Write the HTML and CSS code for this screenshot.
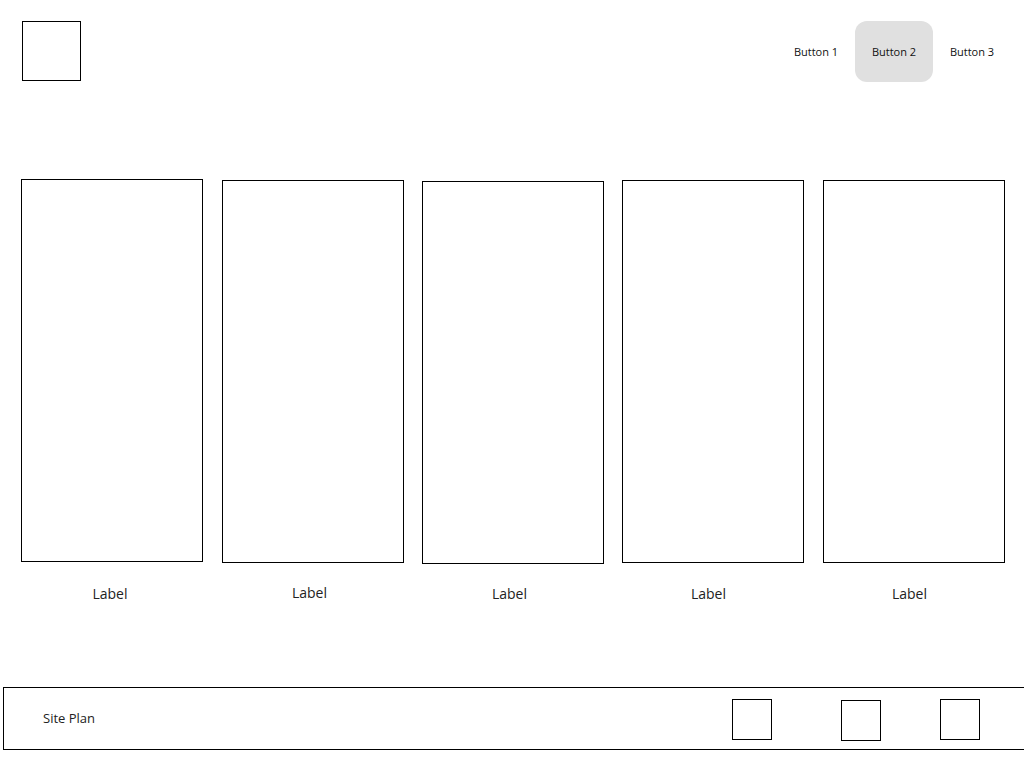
FILE: index.html
```html
<!DOCTYPE html>
<html>
<head>
<meta charset="utf-8">
<link rel="stylesheet" href="styles.css">
</head>
<body>
<div class="page">
  <header class="header">
    <div class="logo"></div>
    <nav class="nav">
      <div class="nav-btn">Button 1</div>
      <div class="nav-btn active">Button 2</div>
      <div class="nav-btn">Button 3</div>
    </nav>
  </header>
  <main class="cards">
    <div class="card-col"><div class="card"></div><div class="label">Label</div></div>
    <div class="card-col"><div class="card down1"></div><div class="label up shift-md">Label</div></div>
    <div class="card-col nudge-left"><div class="card down2"></div><div class="label shift-md">Label</div></div>
    <div class="card-col nudge-left"><div class="card down1"></div><div class="label shift-lg">Label</div></div>
    <div class="card-col"><div class="card down1"></div><div class="label shift-lg">Label</div></div>
  </main>
  <footer class="footer">
    <div class="site-plan">Site Plan</div>
    <div class="footer-icons">
      <div class="sq"></div>
      <div class="sq sq-2"></div>
      <div class="sq sq-3"></div>
    </div>
  </footer>
</div>
</body>
</html>
```
FILE: styles.css
```css
html, body {
  margin: 0;
  padding: 0;
  background: #ffffff;
  overflow: hidden;
}
body {
  font-family: "Open Sans", "Liberation Sans", sans-serif;
  color: #222;
  width: 1024px;
  height: 768px;
}
.page {
  display: flex;
  flex-direction: column;
}
.header {
  display: flex;
  justify-content: space-between;
  align-items: flex-start;
  padding: 21px 13px 0 22px;
  height: 61px;
}
.logo {
  width: 59px;
  height: 60px;
  border: 1px solid #000;
  box-sizing: border-box;
}
.nav {
  display: flex;
}
.nav-btn {
  width: 78px;
  height: 61px;
  display: flex;
  align-items: center;
  justify-content: center;
  font-size: 11px;
  color: #111;
  border-radius: 12px;
}
.nav-btn.active {
  background: #e0e0e0;
}
.cards {
  display: flex;
  justify-content: space-between;
  align-items: flex-start;
  width: 984px;
  margin: 97px 0 0 21px;
  height: 441px;
}
.card-col {
  width: 182px;
  display: flex;
  flex-direction: column;
  align-items: center;
}
.card-col.nudge-left { margin-left: -1px; }
.card {
  width: 182px;
  height: 383px;
  border: 1px solid #000;
  box-sizing: border-box;
}
.card.down1 { margin-top: 1px; margin-bottom: -1px; }
.card.down2 { margin-top: 2px; margin-bottom: -2px; }
.label {
  margin-top: 23px;
  font-size: 14px;
  line-height: 17px;
  color: #222;
  margin-left: -4px;
}
.label.up { margin-top: 22px; }
.label.shift-md { margin-left: -7px; }
.label.shift-lg { margin-left: -9px; }
.footer {
  margin: 67px 0 0 3px;
  width: 1040px;
  height: 63px;
  border: 1px solid #000;
  box-sizing: border-box;
  display: flex;
  align-items: center;
}
.site-plan {
  padding-left: 39px;
  font-size: 13px;
  color: #222;
  width: 689px;
  margin-top: -1px;
}
.footer-icons {
  display: flex;
  align-items: flex-start;
  margin-top: 2px;
}
.sq {
  width: 40px;
  height: 41px;
  border: 1px solid #000;
  box-sizing: border-box;
}
.sq-2 {
  margin-left: 69px;
  margin-top: 1px;
}
.sq-3 {
  margin-left: 59px;
}
```
